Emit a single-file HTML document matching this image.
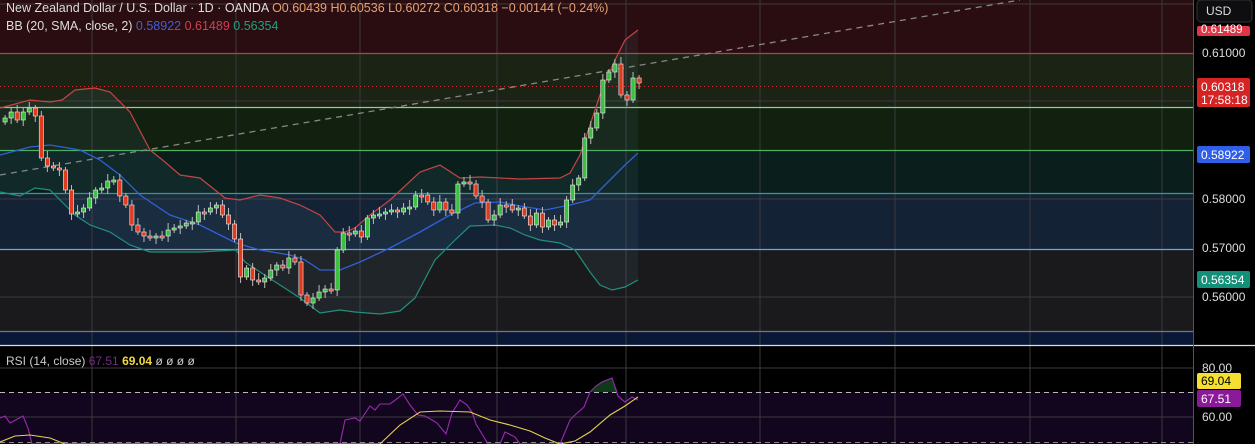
<!DOCTYPE html>
<html><head><meta charset="utf-8"><style>
body{margin:0;width:1255px;height:444px;overflow:hidden;background:#000;font-family:"Liberation Sans",sans-serif;}
svg{display:block}
</style></head><body>
<svg id="s" width="1255" height="444" xmlns="http://www.w3.org/2000/svg" font-family="Liberation Sans, sans-serif">
<rect x="0" y="0" width="1193" height="53" fill="#2a0d10"/>
<rect x="0" y="53" width="1193" height="54" fill="#1a2314"/>
<rect x="0" y="107" width="1193" height="43" fill="#11200f"/>
<rect x="0" y="150" width="1193" height="43" fill="#0a1f1c"/>
<rect x="0" y="193" width="1193" height="56" fill="#142236"/>
<rect x="0" y="249" width="1193" height="82" fill="#1a1a1d"/>
<rect x="0" y="331" width="1193" height="14" fill="#0a1838"/>
<rect x="0" y="392" width="1193" height="52" fill="#12061e"/>
<g stroke="#3a3a3e" stroke-width="1">
<line x1="92" y1="0" x2="92" y2="444"/><line x1="236" y1="0" x2="236" y2="444"/><line x1="360" y1="0" x2="360" y2="444"/><line x1="497" y1="0" x2="497" y2="444"/><line x1="626" y1="0" x2="626" y2="444"/><line x1="760" y1="0" x2="760" y2="444"/><line x1="895" y1="0" x2="895" y2="444"/><line x1="1030" y1="0" x2="1030" y2="444"/><line x1="1162" y1="0" x2="1162" y2="444"/>
<line x1="0" y1="4" x2="1193" y2="4"/><line x1="0" y1="101" x2="1193" y2="101"/><line x1="0" y1="199" x2="1193" y2="199"/><line x1="0" y1="297" x2="1193" y2="297"/><line x1="0" y1="368" x2="1193" y2="368"/><line x1="0" y1="417" x2="1193" y2="417"/>
</g>
<g stroke-width="1.2">
<line x1="0" y1="53.5" x2="1193" y2="53.5" stroke="#c04040"/>
<line x1="0" y1="107.5" x2="1193" y2="107.5" stroke="#8fd08f"/>
<line x1="0" y1="150.5" x2="1193" y2="150.5" stroke="#4fb060"/>
<line x1="0" y1="193.5" x2="1193" y2="193.5" stroke="#2aa090"/>
<line x1="0" y1="249.5" x2="1193" y2="249.5" stroke="#60a8e8"/>
<line x1="0" y1="331.5" x2="1193" y2="331.5" stroke="#777"/>
</g>
<line x1="0" y1="86.5" x2="1193" y2="86.5" stroke="#d03030" stroke-dasharray="1 3"/>
<line x1="0" y1="175" x2="1020" y2="0" stroke="#888" stroke-width="1.3" stroke-dasharray="6 5"/>
<polygon id="bbfill" fill="rgba(90,140,160,0.10)"/>
<polyline id="up" fill="none" stroke="#c44545" stroke-width="1.2"/>
<polyline id="mid" fill="none" stroke="#3060d8" stroke-width="1.3"/>
<polyline id="lo" fill="none" stroke="#20907a" stroke-width="1.2"/>
<g id="candles"></g>
<line x1="0" y1="345.5" x2="1255" y2="345.5" stroke="#ddd" stroke-width="1.2"/>
<line x1="0" y1="392.5" x2="1193" y2="392.5" stroke="#bbb" stroke-dasharray="5 4"/>
<line x1="0" y1="442.5" x2="1193" y2="442.5" stroke="#888" stroke-dasharray="5 4"/>
<polygon points="590,392 596,386 602,382 612,378 618,392" fill="#0f3a1a"/>
<polyline id="rsi" fill="none" stroke="#9a2ab0" stroke-width="1.1"/>
<polyline id="rma" fill="none" stroke="#e8d050" stroke-width="1.1"/>
<text x="6" y="365" font-size="12" fill="#ccc">RSI (14, close) <tspan fill="#7a2a8a">67.51</tspan> <tspan fill="#f0d840" font-weight="bold">69.04</tspan> <tspan fill="#ccc">ø ø ø ø</tspan></text>
<text x="6" y="12" font-size="12.5" fill="#ddd">New Zealand Dollar / U.S. Dollar · 1D · OANDA <tspan fill="#e8a070">O0.60439 H0.60536 L0.60272 C0.60318 −0.00144 (−0.24%)</tspan></text>
<text x="6" y="30" font-size="12.5" fill="#ddd">BB (20, SMA, close, 2) <tspan fill="#4060d0">0.58922</tspan> <tspan fill="#d04050">0.61489</tspan> <tspan fill="#20a080">0.56354</tspan></text>
<line x1="1193.5" y1="0" x2="1193.5" y2="444" stroke="#555"/>
<rect x="1197" y="26" width="53" height="10" rx="2" fill="#e03545"/>
<rect x="1197" y="0" width="55" height="22" rx="4" fill="#0e0e10" stroke="#333"/>
<text x="1206" y="15" font-size="12" fill="#ddd">USD</text>
<text x="1201" y="33" font-size="11.5" fill="#fff">0.61489</text>
<g font-size="12" fill="#ddd">
<text x="1202" y="57">0.61000</text><text x="1202" y="203">0.58000</text><text x="1202" y="252">0.57000</text><text x="1202" y="301">0.56000</text>
<text x="1202" y="372">80.00</text><text x="1202" y="421">60.00</text>
</g>
<rect x="1197" y="78" width="53" height="29" rx="2" fill="#d42424"/>
<text x="1201" y="91" font-size="12" fill="#fff">0.60318</text>
<text x="1201" y="104" font-size="12" fill="#fff">17:58:18</text>
<rect x="1197" y="146" width="53" height="17" rx="2" fill="#2f5ee8"/>
<text x="1201" y="159" font-size="12" fill="#fff">0.58922</text>
<rect x="1197" y="271" width="53" height="17" rx="2" fill="#129078"/>
<text x="1201" y="284" font-size="12" fill="#fff">0.56354</text>
<rect x="1197" y="373" width="44" height="16" rx="2" fill="#f5e030"/>
<text x="1201" y="385" font-size="12" fill="#000">69.04</text>
<rect x="1197" y="390" width="44" height="17" rx="2" fill="#8a1a9a"/>
<text x="1201" y="403" font-size="12" fill="#fff">67.51</text>
</svg>
<script>
(function(){
var NS='http://www.w3.org/2000/svg';
var up=[[0,108],[30,100],[50,102],[62,100],[75,90],[95,88],[110,92],[130,112],[150,150],[165,162],[180,175],[200,178],[225,198],[240,200],[260,195],[280,198],[300,205],[320,215],[335,232],[345,232],[355,228],[370,215],[390,200],[420,172],[440,165],[460,178],[480,177],[520,179],[560,178],[570,173],[580,155],[590,125],[600,95],[615,60],[625,40],[638,30]];
var mid=[[0,155],[30,147],[50,145],[80,150],[100,160],[120,175],[140,195],[170,215],[200,225],[236,243],[260,250],[290,255],[305,260],[320,270],[340,270],[360,262],[390,248],[420,232],[450,215],[475,203],[500,202],[520,206],[545,210],[570,205],[590,200],[610,180],[625,165],[638,153]];
var lo=[[0,192],[20,196],[35,188],[50,190],[65,205],[75,215],[90,225],[110,232],[130,245],[150,252],[200,252],[236,250],[245,262],[260,272],[280,285],[300,298],[320,313],[340,310],[355,312],[380,314],[400,311],[415,298],[435,260],[455,240],[470,226],[495,225],[510,228],[525,235],[540,240],[560,243],[575,250],[590,272],[600,285],[612,290],[625,287],[638,280]];
function s(a){return a.map(function(p){return p.join(',')}).join(' ')}
document.getElementById('up').setAttribute('points',s(up));
document.getElementById('mid').setAttribute('points',s(mid));
document.getElementById('lo').setAttribute('points',s(lo));
document.getElementById('bbfill').setAttribute('points',s(up.concat(lo.slice().reverse())));
var rsi=[[0,418],[5,416],[10,423],[23,416],[28,428],[32,444],[340,444],[345,420],[355,418],[360,421],[370,406],[375,410],[380,404],[390,404],[398,398],[403,394],[410,405],[418,415],[425,416],[432,420],[437,423],[446,434],[452,413],[460,400],[467,405],[472,412],[476,424],[482,434],[488,444],[500,444],[505,432],[515,437],[520,444],[560,444],[570,420],[575,415],[584,407],[590,392],[596,386],[602,382],[612,378],[618,396],[625,402],[632,397],[638,400]];
var rma=[[0,442],[15,436],[30,435],[50,438],[65,444],[380,444],[400,425],[420,412],[440,411],[470,412],[490,420],[510,425],[530,431],[545,438],[560,444],[575,441],[590,432],[610,415],[625,406],[638,397]];
document.getElementById('rsi').setAttribute('points',s(rsi));
document.getElementById('rma').setAttribute('points',s(rma));
var c=[118,112,120,112,108,116,158,166,168,170,190,214,212,208,198,190,188,181,180,196,205,225,232,236,238,236,236,230,228,226,223,222,212,212,208,205,215,224,239,277,268,280,282,278,270,265,268,258,262,295,303,298,292,289,290,250,233,234,231,237,218,215,214,212,210,212,208,207,195,195,202,210,202,210,213,184,182,184,196,202,220,215,205,205,210,208,216,225,213,227,220,225,222,200,185,178,138,128,113,80,72,64,95,100,78,83];
var G=document.getElementById('candles'),prev=122,n=c.length,step=640/n;
function el(t,a){var e=document.createElementNS(NS,t);for(var k in a)e.setAttribute(k,String(a[k]));G.appendChild(e);}
for(var i=0;i<n;i++){var x=3+i*step,o=prev,cl=c[i];var yt=Math.min(o,cl),yb=Math.max(o,cl);var bull=cl<o;if(yb-yt<2){yb=yt+2;}
var col=bull?'#3cc040':'#e03a20';var w1=yt-3-((i*7)%5),w2=yb+3+((i*3)%6);
el('line',{x1:x+2.1,y1:w1,x2:x+2.1,y2:w2,stroke:'#bbb','stroke-width':1});
el('rect',{x:x,y:yt,width:4.2,height:yb-yt,fill:col,stroke:'#eee','stroke-width':0.6});prev=cl;}
})();
</script>
</body></html>
